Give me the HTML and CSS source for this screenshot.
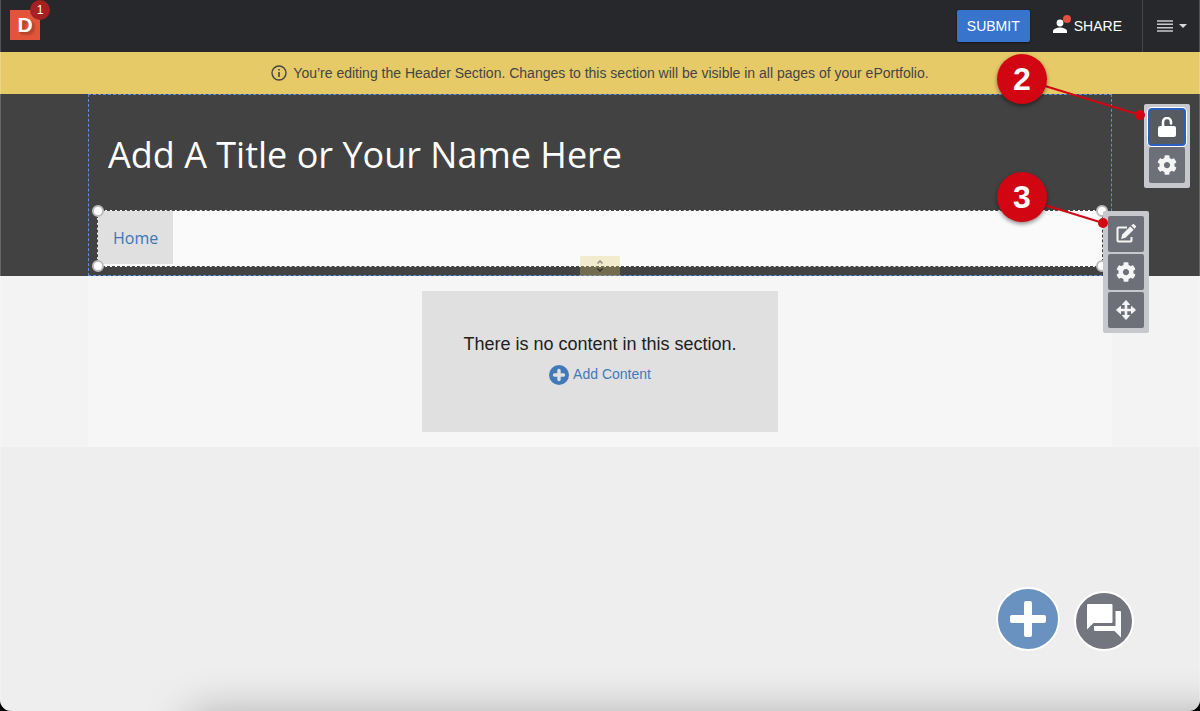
FILE: index.html
```html
<!DOCTYPE html>
<html lang="en">
<head>
    <meta charset="UTF-8">
    <meta name="viewport" content="width=device-width, initial-scale=1.0">
    <title>ePortfolio Editor</title>
    <link rel="stylesheet" href="styles.css">
</head>
<body>
    <!-- Shared icons -->
    <svg class="sprite" aria-hidden="true">
        <symbol id="icon-gear" viewBox="0 0 512 512">
            <path d="M487.4 315.7l-42.6-24.6c4.3-23.2 4.3-47 0-70.2l42.6-24.6c4.9-2.8 7.1-8.6 5.5-14-11.1-35.6-30-67.8-54.7-94.6-3.8-4.1-10-5.1-14.8-2.3L380.8 110c-17.9-15.4-38.5-27.3-60.8-35.1V25.8c0-5.6-3.9-10.5-9.4-11.7-36.7-8.2-74.3-7.8-109.2 0-5.5 1.2-9.4 6.1-9.4 11.7V75c-22.2 7.9-42.8 19.8-60.8 35.1L88.7 85.5c-4.9-2.8-11-1.9-14.8 2.3-24.7 26.7-43.6 58.9-54.7 94.6-1.7 5.4.6 11.2 5.5 14L67.3 221c-4.3 23.2-4.3 47 0 70.2l-42.6 24.6c-4.9 2.8-7.1 8.6-5.5 14 11.1 35.6 30 67.8 54.7 94.6 3.8 4.1 10 5.1 14.8 2.3l42.6-24.6c17.9 15.4 38.5 27.3 60.8 35.1v49.2c0 5.6 3.9 10.5 9.4 11.7 36.7 8.2 74.3 7.8 109.2 0 5.5-1.2 9.4-6.1 9.4-11.7v-49.2c22.2-7.9 42.8-19.8 60.8-35.1l42.6 24.6c4.9 2.8 11 1.9 14.8-2.3 24.7-26.7 43.6-58.9 54.7-94.6 1.5-5.5-.7-11.3-5.6-14.1zM256 336c-44.1 0-80-35.9-80-80s35.9-80 80-80 80 35.9 80 80-35.9 80-80 80z"/>
        </symbol>
    </svg>

    <div class="window">
        <header class="topbar">
            <a href="#" class="logo" aria-label="Home, 1 notification">
                <span class="logo-letter">D</span>
                <span class="logo-badge">1</span>
            </a>
            <div class="topbar-actions">
                <button type="button" class="submit-button">SUBMIT</button>
                <button type="button" class="share-button">
                    <svg width="18" height="18" viewBox="0 0 18 18" aria-hidden="true">
                        <circle cx="7" cy="8" r="3.4" fill="#fff"/>
                        <path d="M0 18v-1.8c0-2.4 4.6-3.6 7-3.6s7 1.2 7 3.6V18z" fill="#fff"/>
                        <circle cx="14" cy="4" r="4" fill="#e25141"/>
                    </svg>
                    SHARE
                </button>
                <button type="button" class="menu-button" aria-label="Menu">
                    <svg width="30" height="12" viewBox="0 0 30 12" aria-hidden="true">
                        <path d="M0 1h16M0 4.3h16M0 7.7h16M0 11h16" stroke="#c9c9c9" stroke-width="1.4"/>
                        <path d="M22 4h8l-4 4z" fill="#d8d8d8"/>
                    </svg>
                </button>
            </div>
        </header>

        <div class="notice">
            <svg width="16" height="16" viewBox="0 0 16 16" aria-hidden="true">
                <circle cx="8" cy="8" r="7" fill="none" stroke="#454545" stroke-width="1.4"/>
                <path d="M7.2 4h1.6v1.6H7.200zM7.200 7h1.600v5H7.200z" fill="#454545"/>
            </svg>
            <span>You’re editing the Header Section. Changes to this section will be visible in all pages of your ePortfolio.</span>
        </div>

        <section class="header-section">
            <div class="header-inner">
                <h1 class="page-title">Add A Title or Your Name Here</h1>
                <div class="nav-module">
                    <nav class="page-nav">
                        <a href="#" class="page-tab">Home</a>
                    </nav>
                    <span class="handle handle-tl"></span>
                    <span class="handle handle-tr"></span>
                    <span class="handle handle-bl"></span>
                    <span class="handle handle-br"></span>

                    <div class="tools module-tools">
                        <button type="button" class="tool" aria-label="Edit">
                            <svg width="20" height="20" viewBox="0 0 20 20" aria-hidden="true">
                                <path d="M11 3.500H2.500a1 1 0 0 0-1 1v12a1 1 0 0 0 1 1h12a1 1 0 0 0 1-1V13" fill="none" stroke="#f5f5f5" stroke-width="2"/>
                                <path d="M14.200 2.400l3.400 3.400-8.100 8-4.400 1.100 1.100-4.500zM15.200 1.500l1.200-1a1.300 1.300 0 0 1 1.800 0l1.400 1.300a1.300 1.300 0 0 1 0 1.800l-1.100 1.200z" fill="#f5f5f5"/>
                            </svg>
                        </button>
                        <button type="button" class="tool" aria-label="Settings">
                            <svg width="20" height="20" fill="#f5f5f5" aria-hidden="true"><use href="#icon-gear"/></svg>
                        </button>
                        <button type="button" class="tool" aria-label="Move">
                            <svg width="20" height="20" viewBox="0 0 20 20" aria-hidden="true">
                                <path d="M10 2v16M2 10h16" stroke="#f5f5f5" stroke-width="2.6"/>
                                <path d="M10 .5l3.600 4H6.400zM10 19.500l3.600-4H6.400zM.5 10l4-3.600v7.200zM19.500 10l-4-3.600v7.200z" fill="#f5f5f5" stroke="#f5f5f5" stroke-linejoin="round"/>
                            </svg>
                        </button>
                        <div class="callout callout-module">
                            <svg width="111" height="56" viewBox="0 0 111 56" aria-hidden="true">
                                <path d="M25 26l81 25" stroke="#d20613" stroke-width="2"/>
                                <circle cx="106" cy="51" r="5" fill="#d20613"/>
                            </svg>
                            <span class="callout-number">3</span>
                        </div>
                    </div>
                </div>
                <button type="button" class="section-resizer" aria-label="Resize section">
                    <svg width="6" height="12" viewBox="0 0 6 12" aria-hidden="true">
                        <path d="M.5 3.500L3 1l2.500 2.500" fill="none" stroke="#8a8778" stroke-width="1.4"/>
                        <path d="M.5 8.500L3 11l2.500-2.500" fill="none" stroke="#33322c" stroke-width="1.4"/>
                    </svg>
                </button>
            </div>

            <div class="tools section-tools">
                <button type="button" class="tool tool-active" aria-label="Unlock section">
                    <svg width="18" height="20" viewBox="0 0 18 20" aria-hidden="true">
                        <path d="M5 10V5a4 4 0 0 1 8 0v1.500" fill="none" stroke="#fff" stroke-width="2.6" stroke-linecap="round"/>
                        <rect x="0" y="9" width="18" height="11" rx="2" fill="#fff"/>
                    </svg>
                </button>
                <button type="button" class="tool" aria-label="Section settings">
                    <svg width="20" height="20" fill="#f5f5f5" aria-hidden="true"><use href="#icon-gear"/></svg>
                </button>
                <div class="callout callout-section">
                    <svg width="148" height="66" viewBox="0 0 148 66" aria-hidden="true">
                        <path d="M25 25l118 36" stroke="#d20613" stroke-width="2"/>
                        <circle cx="143" cy="61" r="5" fill="#d20613"/>
                    </svg>
                    <span class="callout-number">2</span>
                </div>
            </div>
        </section>

        <main class="content-section">
            <div class="content-inner">
                <div class="empty-box">
                    <p class="empty-text">There is no content in this section.</p>
                    <a href="#" class="add-content">
                        <svg width="20" height="20" viewBox="0 0 20 20" aria-hidden="true">
                            <circle cx="10" cy="10" r="10" fill="#4479b8"/>
                            <path d="M10 5.500v9M5.500 10h9" stroke="#e0e0e0" stroke-width="3.4" stroke-linecap="round"/>
                        </svg>
                        <span>Add Content</span>
                    </a>
                </div>
            </div>
        </main>

        <div class="floating-actions">
            <button type="button" class="fab fab-add" aria-label="Add">
                <svg width="36" height="36" viewBox="0 0 36 36" aria-hidden="true">
                    <path d="M16 0h4a2 2 0 0 1 2 2v12h12a2 2 0 0 1 2 2v4a2 2 0 0 1-2 2H22v12a2 2 0 0 1-2 2h-4a2 2 0 0 1-2-2V22H2a2 2 0 0 1-2-2v-4a2 2 0 0 1 2-2h12V2a2 2 0 0 1 2-2z" fill="#fff"/>
                </svg>
            </button>
            <button type="button" class="fab fab-chat" aria-label="Conversation">
                <svg width="34" height="34" viewBox="0 0 34 34" aria-hidden="true">
                    <path d="M1 0h23.500a1 1 0 0 1 1 1v17a1 1 0 0 1-1 1H6.500L0 25.500V1a1 1 0 0 1 1-1z" fill="#fff"/>
                    <path d="M28.500 7H33a1 1 0 0 1 1 1v25.500L27.500 27H8a1 1 0 0 1-1-1v-4h21.500z" fill="#fff"/>
                </svg>
            </button>
        </div>

        <div class="bottom-shade"></div>
    </div>
</body>
</html>
```

FILE: styles.css
```css
* {
    box-sizing: border-box;
}

body {
    margin: 0;
    background-color: #000;
    font-family: "Liberation Sans", Arial, sans-serif;
    color: #212121;
}

button {
    padding: 0;
    border: none;
    background: none;
    font-family: inherit;
    cursor: pointer;
}

svg {
    display: block;
    flex: none;
}

.sprite {
    display: none;
}

.window {
    position: relative;
    min-height: 100vh;
    overflow: hidden;
    background-color: #eee;
    border-radius: 0 0 11px 11px;
}

/* Thin light edge of the window */
.window::after {
    content: "";
    position: absolute;
    inset: 0;
    border: solid rgba(255, 255, 255, 0.2);
    border-width: 0 1px;
    pointer-events: none;
}

/* Top bar */
.topbar {
    display: flex;
    justify-content: space-between;
    align-items: stretch;
    height: 52px;
    padding-left: 10px;
    background-color: #26282c;
}

.logo {
    position: relative;
    display: flex;
    align-items: center;
    justify-content: center;
    width: 30px;
    height: 30px;
    margin-top: 10px;
    background-color: #e2553b;
    color: #fff;
    text-decoration: none;
}

.logo-letter {
    font-size: 21px;
    line-height: 30px;
    font-weight: 700;
    text-shadow: 1px 1px 1px #b5442f, 2px 2px 2px #b5442f, 3px 3px 2px #c04932;
}

.logo-badge {
    position: absolute;
    top: -10px;
    right: -10px;
    width: 20px;
    height: 20px;
    border-radius: 50%;
    background-color: #a52020;
    font-size: 12px;
    line-height: 20px;
    text-align: center;
}

.topbar-actions {
    display: flex;
    align-items: center;
}

.submit-button {
    width: 73px;
    height: 32px;
    margin-right: 23px;
    border-radius: 2px;
    background-color: #3873cc;
    box-shadow: 0 1px 2px rgba(0, 0, 0, 0.5);
    color: #fff;
    font-size: 14px;
}

.share-button {
    display: flex;
    align-items: center;
    gap: 3px;
    margin-right: 20px;
    color: #fff;
    font-size: 14px;
}

.share-button svg {
    margin-bottom: 4px;
}

.menu-button {
    align-self: stretch;
    padding: 0 13px 0 14px;
    border-left: 1px solid #44464a;
}

/* Notice */
.notice {
    display: flex;
    align-items: center;
    justify-content: center;
    gap: 6px;
    min-height: 42px;
    background-color: #e6ca67;
    color: #454545;
    font-size: 14px;
    line-height: 20px;
}

/* Header section */
.header-section {
    position: relative;
    background-color: #424242;
}

.header-inner {
    position: relative;
    max-width: 1024px;
    margin: 0 auto;
    padding: 36px 8px 8px;
    border: 1px dashed #5b8fe0;
}

.page-title {
    margin: 0 0 31px;
    padding: 0 11px;
    color: #fff;
    font-family: "Open Sans", sans-serif;
    font-size: 36px;
    line-height: 48px;
    font-weight: 400;
}

.nav-module {
    position: relative;
    border: 1px dashed #424242;
    background-color: #fafafa;
}

.page-nav {
    display: flex;
    padding-bottom: 2px;
}

.page-tab {
    padding: 15px 15px 14px;
    background-color: #e0e0e0;
    color: #3b76b8;
    font-family: "Open Sans", sans-serif;
    font-size: 16px;
    line-height: 24px;
    text-decoration: none;
}

/* Selection handles on the corners */
.handle {
    position: absolute;
    width: 12px;
    height: 12px;
    border: 2px solid #bdbdbd;
    border-radius: 50%;
    background-color: #fff;
}

.handle-tl {
    top: -6px;
    left: -6px;
}

.handle-tr {
    top: -6px;
    right: -6px;
}

.handle-bl {
    bottom: -6px;
    left: -6px;
}

.handle-br {
    bottom: -6px;
    right: -6px;
}

.section-resizer {
    position: absolute;
    bottom: -1px;
    left: 50%;
    display: flex;
    align-items: center;
    justify-content: center;
    width: 40px;
    height: 20px;
    margin-left: -20px;
    border-radius: 2px 2px 0 0;
    background-color: rgba(230, 202, 103, 0.3);
}

/* Tool groups */
.tools {
    position: absolute;
    z-index: 2;
    display: flex;
    flex-direction: column;
    gap: 2px;
    padding: 5px;
    border-radius: 2px;
    background-color: #c7c8cd;
}

.section-tools {
    top: 10px;
    right: 10px;
}

.module-tools {
    top: 0;
    left: 100%;
    margin-left: 1px;
}

.tool {
    display: flex;
    align-items: center;
    justify-content: center;
    width: 36px;
    height: 36px;
    border-radius: 2px;
    background-color: #6e7079;
}

.tool-active {
    position: relative;
    z-index: 1;
    border: 1px solid #2a5fc4;
    border-radius: 3px;
    background-color: #565a61;
    box-shadow: 0 0 0 1px #2a5fc4, 0 0 0 2px #fff;
}

/* Numbered callouts */
.callout {
    position: absolute;
    z-index: 2;
}

.callout-section {
    top: -50px;
    right: 45px;
}

.callout-module {
    top: -39px;
    right: 41px;
}

.callout-number {
    position: absolute;
    top: 0;
    left: 0;
    width: 50px;
    height: 50px;
    border-radius: 50%;
    background-color: #d20613;
    box-shadow: 0 2px 4px rgba(0, 0, 0, 0.45);
    color: #fff;
    font-size: 32px;
    font-weight: 700;
    line-height: 50px;
    text-align: center;
}

/* Content section */
.content-section {
    background-color: #f3f3f3;
}

.content-inner {
    max-width: 1024px;
    margin: 0 auto;
    padding: 15px;
    background-color: #f6f6f6;
}

.empty-box {
    display: flex;
    flex-direction: column;
    align-items: center;
    gap: 8px;
    width: fit-content;
    margin: 0 auto;
    padding: 41px 41px 46px;
    background-color: #e0e0e0;
}

.empty-text {
    margin: 0;
    font-size: 18px;
    line-height: 24px;
}

.add-content {
    display: flex;
    align-items: center;
    gap: 4px;
    height: 22px;
    color: #4479b8;
    font-size: 14px;
    line-height: 20px;
    text-decoration: none;
}

.add-content span {
    padding-bottom: 2px;
}

/* Floating buttons */
.floating-actions {
    position: absolute;
    right: 66px;
    bottom: 60px;
    display: flex;
    align-items: flex-end;
    gap: 14px;
}

.fab {
    display: flex;
    align-items: center;
    justify-content: center;
    border: 2px solid #fff;
    border-radius: 50%;
}

.fab-add {
    width: 64px;
    height: 64px;
    background-color: #6a92c1;
}

.fab-chat {
    width: 60px;
    height: 60px;
    background-color: #73767f;
}

/* Soft shade along the bottom edge */
.bottom-shade {
    position: absolute;
    top: 100%;
    left: 190px;
    right: -60px;
    height: 60px;
    box-shadow: 0 4px 45px rgba(0, 0, 0, 0.3);
}
```
